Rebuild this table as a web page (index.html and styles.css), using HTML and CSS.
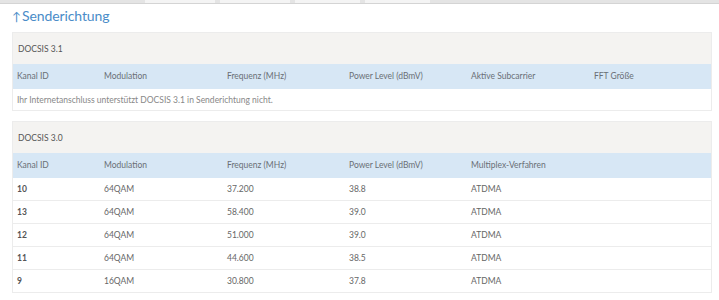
FILE: index.html
```html
<!DOCTYPE html>
<html lang="de">
<head>
<meta charset="utf-8">
<link rel="stylesheet" href="styles.css">
</head>
<body>
<div class="topbar">
  <span class="tab t1"></span><span class="tab t2"></span><span class="tab t3"></span><span class="tab t4"></span>
</div>
<h2 class="title"><span class="arrow">↑</span>Senderichtung</h2>

<section class="box">
  <div class="boxhead">DOCSIS 3.1</div>
  <div class="row thead">
    <div>Kanal ID</div><div>Modulation</div><div>Frequenz (MHz)</div><div>Power Level (dBmV)</div><div>Aktive Subcarrier</div><div>FFT Größe</div>
  </div>
  <div class="note">Ihr Internetanschluss unterstützt DOCSIS 3.1 in Senderichtung nicht.</div>
</section>

<section class="box">
  <div class="boxhead">DOCSIS 3.0</div>
  <div class="row thead">
    <div>Kanal ID</div><div>Modulation</div><div>Frequenz (MHz)</div><div>Power Level (dBmV)</div><div>Multiplex-Verfahren</div><div></div>
  </div>
  <div class="row"><div class="id">10</div><div>64QAM</div><div>37.200</div><div>38.8</div><div>ATDMA</div><div></div></div>
  <div class="row"><div class="id">13</div><div>64QAM</div><div>58.400</div><div>39.0</div><div>ATDMA</div><div></div></div>
  <div class="row"><div class="id">12</div><div>64QAM</div><div>51.000</div><div>39.0</div><div>ATDMA</div><div></div></div>
  <div class="row"><div class="id">11</div><div>64QAM</div><div>44.600</div><div>38.5</div><div>ATDMA</div><div></div></div>
  <div class="row last"><div class="id">9</div><div>16QAM</div><div>30.800</div><div>37.8</div><div>ATDMA</div><div></div></div>
</section>
</body>
</html>
```
FILE: styles.css
```css
html, body {
  margin: 0;
  padding: 0;
  background: #fff;
}
body {
  font-family: Lato, "Liberation Sans", sans-serif;
  color: #666;
  font-size: 8.5px;
}
.topbar {
  height: 3px;
  background: #e4e4e4;
  border-bottom: 1px solid #d4d4d4;
  display: flex;
  padding-left: 145px;
  gap: 5px;
}
.tab { display: block; height: 3px; background: #f4f4f4; }
.t1 { width: 70px; }
.t2 { width: 70px; }
.t3 { width: 65px; }
.t4 { width: 65px; }
.title {
  margin: 0;
  padding: 3px 0 0 12px;
  font-size: 14px;
  font-weight: 400;
  color: #4a8cc8;
  height: 25px;
  line-height: 18px;
  letter-spacing: -0.1px;
}
.arrow {
  display: inline-block;
  width: 10px;
  font-size: 12px;
}
.box {
  margin: 0 7px 10px 12px;
  border: 1px solid #ececec;
  background: #fff;
}
.boxhead {
  background: #f4f3f1;
  height: 30px;
  padding-top: 1px;
  line-height: 31px;
  padding-left: 5px;
  color: #555;
}
.row {
  display: grid;
  grid-template-columns: 87px 123px 122px 122px 123px 1fr;
  height: 22px;
  line-height: 22px;
  border-bottom: 1px solid #ececec;
  padding-left: 4px;
}
.row.thead {
  background: #d7e7f5;
  height: 25px;
  line-height: 25px;
  border-bottom: none;
  color: #6a6f75;
}
.row.last { border-bottom: none; }
.id { font-weight: 700; color: #555; }
.note {
  height: 21px;
  line-height: 22px;
  padding-left: 4px;
  color: #888;
}
```
